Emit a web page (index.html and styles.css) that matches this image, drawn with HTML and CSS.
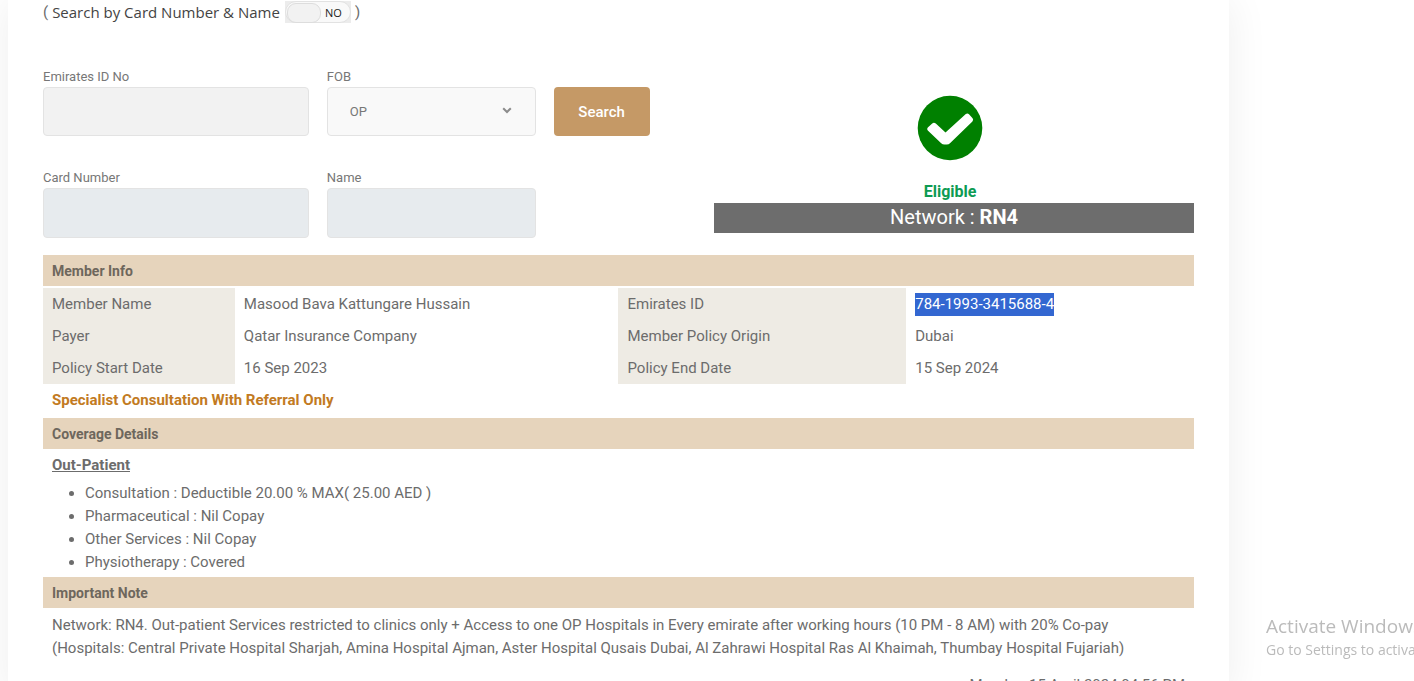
FILE: index.html
```html
<!DOCTYPE html>
<html lang="en">
<head>
    <meta charset="UTF-8">
    <meta name="viewport" content="width=device-width, initial-scale=1.0">
    <title>Member Eligibility</title>
    <link rel="stylesheet" href="styles.css">
</head>
<body>
    <main class="card">
        <div class="search-mode">
            <span class="paren">(</span>
            <label for="search-toggle">Search by Card Number &amp; Name</label>
            <span class="toggle">
                <input type="checkbox" id="search-toggle" class="toggle-input">
                <span class="toggle-text">NO</span>
            </span>
            <span class="paren">)</span>
        </div>

        <div class="top">
            <form class="search-form">
                <div class="field">
                    <label for="emirates-id">Emirates ID No</label>
                    <input type="text" id="emirates-id" class="control">
                </div>
                <div class="field">
                    <label for="fob">FOB</label>
                    <div class="select-wrap">
                        <select id="fob" class="control control-select">
                            <option>OP</option>
                        </select>
                        <svg class="chevron" width="10" height="7" viewBox="0 0 10 7">
                            <path d="M1.2 1.2 L5 5 L8.8 1.2" fill="none" stroke="#8c8c8c" stroke-width="2"/>
                        </svg>
                    </div>
                </div>
                <button type="button" class="search-button">Search</button>
                <div class="field">
                    <label for="card-number">Card Number</label>
                    <input type="text" id="card-number" class="control" disabled>
                </div>
                <div class="field">
                    <label for="name">Name</label>
                    <input type="text" id="name" class="control" disabled>
                </div>
            </form>

            <div class="status">
                <div class="eligibility">
                    <svg class="status-icon" width="66" height="66" viewBox="0 0 66 66">
                        <circle cx="33" cy="33" r="32.3" fill="#008000"/>
                        <path d="M10.8 32.6 L15.2 28.4 Q17 27 18.8 28.6 L28.5 37.5 L48.8 19.1 Q50.4 17.8 52 19.2 L55.6 23.2 Q56.8 24.8 55.4 26.4 L33 48.2 Q31.8 49.6 29.8 49.6 L27.4 49.6 Q25.6 49.6 24.2 48.2 L10.8 35.6 Q9.4 34 10.8 32.6 Z" fill="#fff"/>
                    </svg>
                    <div class="status-text">Eligible</div>
                </div>
                <div class="network">Network : <b>RN4</b></div>
            </div>
        </div>

        <h2 class="section-title">Member Info</h2>
        <table class="info">
            <tr>
                <th class="narrow">Member Name</th>
                <td class="wide">Masood Bava Kattungare Hussain</td>
                <th>Emirates ID</th>
                <td><mark>784-1993-3415688-4</mark></td>
            </tr>
            <tr>
                <th>Payer</th>
                <td>Qatar Insurance Company</td>
                <th>Member Policy Origin</th>
                <td>Dubai</td>
            </tr>
            <tr>
                <th>Policy Start Date</th>
                <td>16 Sep 2023</td>
                <th>Policy End Date</th>
                <td>15 Sep 2024</td>
            </tr>
        </table>
        <p class="referral">Specialist Consultation With Referral Only</p>

        <h2 class="section-title">Coverage Details</h2>
        <div class="coverage">
            <h3>Out-Patient</h3>
            <ul>
                <li>Consultation : Deductible 20.00 % MAX( 25.00 AED )</li>
                <li>Pharmaceutical : Nil Copay</li>
                <li>Other Services : Nil Copay</li>
                <li>Physiotherapy : Covered</li>
            </ul>
        </div>

        <h2 class="section-title">Important Note</h2>
        <p class="note">Network: RN4. Out-patient Services restricted to clinics only + Access to one OP Hospitals in Every emirate after working hours (10 PM - 8 AM) with 20% Co-pay<br>
            (Hospitals: Central Private Hospital Sharjah, Amina Hospital Ajman, Aster Hospital Qusais Dubai, Al Zahrawi Hospital Ras Al Khaimah, Thumbay Hospital Fujariah)</p>
        <p class="timestamp">Monday, 15 April 2024 04:56 PM</p>
    </main>

    <div class="watermark">
        <div class="watermark-title">Activate Windows</div>
        <div>Go to Settings to activate Windows.</div>
    </div>
</body>
</html>
```

FILE: styles.css
```css
* {
    box-sizing: border-box;
}
body {
    margin: 0;
    height: 100vh;
    overflow: hidden;
    background: #fff;
    font-family: Roboto, sans-serif;
    font-size: 15px;
    line-height: 23px;
    color: #6c6c6c;
}
.card {
    margin: 0 185px 0 8px;
    min-height: 100vh;
    padding: 0 35px;
    background: #fff;
    box-shadow: 0 0 40px rgba(0, 0, 0, 0.07);
}
.search-mode {
    display: flex;
    align-items: center;
    gap: 4px;
    height: 24px;
    font-family: "Open Sans", sans-serif;
    color: #444;
}
.paren {
    font-family: Roboto, sans-serif;
    color: #6c6c6c;
}
.toggle {
    position: relative;
    display: flex;
    margin-left: 1px;
    background: #ececec;
}
.toggle-input {
    appearance: none;
    width: 66px;
    height: 22px;
    margin: 0;
    border: 1px solid #e2e2e2;
    border-radius: 11px;
    background: #f9f9f9;
}
.toggle-input::before {
    content: "";
    display: block;
    width: 32px;
    height: 18px;
    margin: 1px;
    border: 1px solid #ddd;
    border-radius: 9px;
    background: #f2f2f2;
}
.toggle-text {
    position: absolute;
    top: 0;
    right: 9px;
    font-size: 11px;
    color: #222;
    pointer-events: none;
}

.top {
    display: flex;
    justify-content: space-between;
    padding: 42px 0 17px;
}
.search-form {
    display: grid;
    grid-template-columns: 266fr 209fr 96fr;
    column-gap: 18px;
    row-gap: 31px;
    width: 52.7%;
    align-items: end;
}
.field label {
    display: block;
    height: 21px;
    font-size: 13px;
    line-height: 21px;
    color: #777;
}
.control {
    display: block;
    width: 100%;
    height: 49px;
    padding: 0 22px;
    border: 1px solid #e3e3e3;
    border-radius: 4px;
    background: #f2f2f2;
    font-family: inherit;
    font-size: 13px;
    color: #777;
}
.control:disabled {
    height: 50px;
    background: #e7ebee;
}
.select-wrap {
    position: relative;
}
.control-select {
    appearance: none;
    background: #f9f9f9;
}
.chevron {
    position: absolute;
    top: 20px;
    right: 24px;
    pointer-events: none;
}
.search-button {
    height: 49px;
    border: none;
    border-radius: 4px;
    background: #c59966;
    font-family: inherit;
    font-size: 15px;
    font-weight: 500;
    color: #fff;
}
.status {
    width: 41.7%;
    padding-top: 29px;
    text-align: center;
}
.eligibility {
    padding-right: 8px;
}
.status-icon {
    display: block;
    margin: 0 auto;
}
.status-text {
    padding-top: 19px;
    font-size: 16px;
    font-weight: 700;
    color: #0d9b53;
}
.network {
    height: 30px;
    background: #6d6d6d;
    font-size: 20px;
    line-height: 29px;
    color: #fff;
}

.section-title {
    margin: 0;
    padding: 5px 9px 3px;
    background: #e6d4bc;
    font-size: 14px;
    font-weight: 700;
    line-height: 23px;
    color: #6e675d;
}
.info {
    width: 100%;
    margin-top: 2px;
    border-collapse: collapse;
    table-layout: fixed;
}
.info th,
.info td {
    height: 32px;
    padding: 0 9px;
    font-weight: 400;
    text-align: left;
}
.info th {
    background: #eeebe4;
}
.info .narrow {
    width: 16.667%;
}
.info .wide {
    width: 33.333%;
}
mark {
    display: inline-block;
    background: #3367d1;
    color: #fff;
}
.referral {
    margin: 0;
    padding: 5px 9px 6px;
    font-weight: 700;
    color: #c27a22;
}
.coverage {
    padding: 5px 9px 3px;
}
.coverage h3 {
    margin: 0 0 5px;
    font-size: 15px;
    font-weight: 700;
    text-decoration: underline;
}
.coverage ul {
    margin: 0;
    padding-left: 33px;
}
.note {
    margin: 0;
    padding: 6px 9px;
}
.timestamp {
    margin: 8px 0 0;
    padding: 0 9px;
    text-align: right;
}

.watermark {
    position: fixed;
    left: calc(100% - 148px);
    bottom: 20px;
    font-family: "Open Sans", sans-serif;
    font-size: 14px;
    white-space: nowrap;
    color: #bbb;
}
.watermark-title {
    font-size: 19px;
}
```
